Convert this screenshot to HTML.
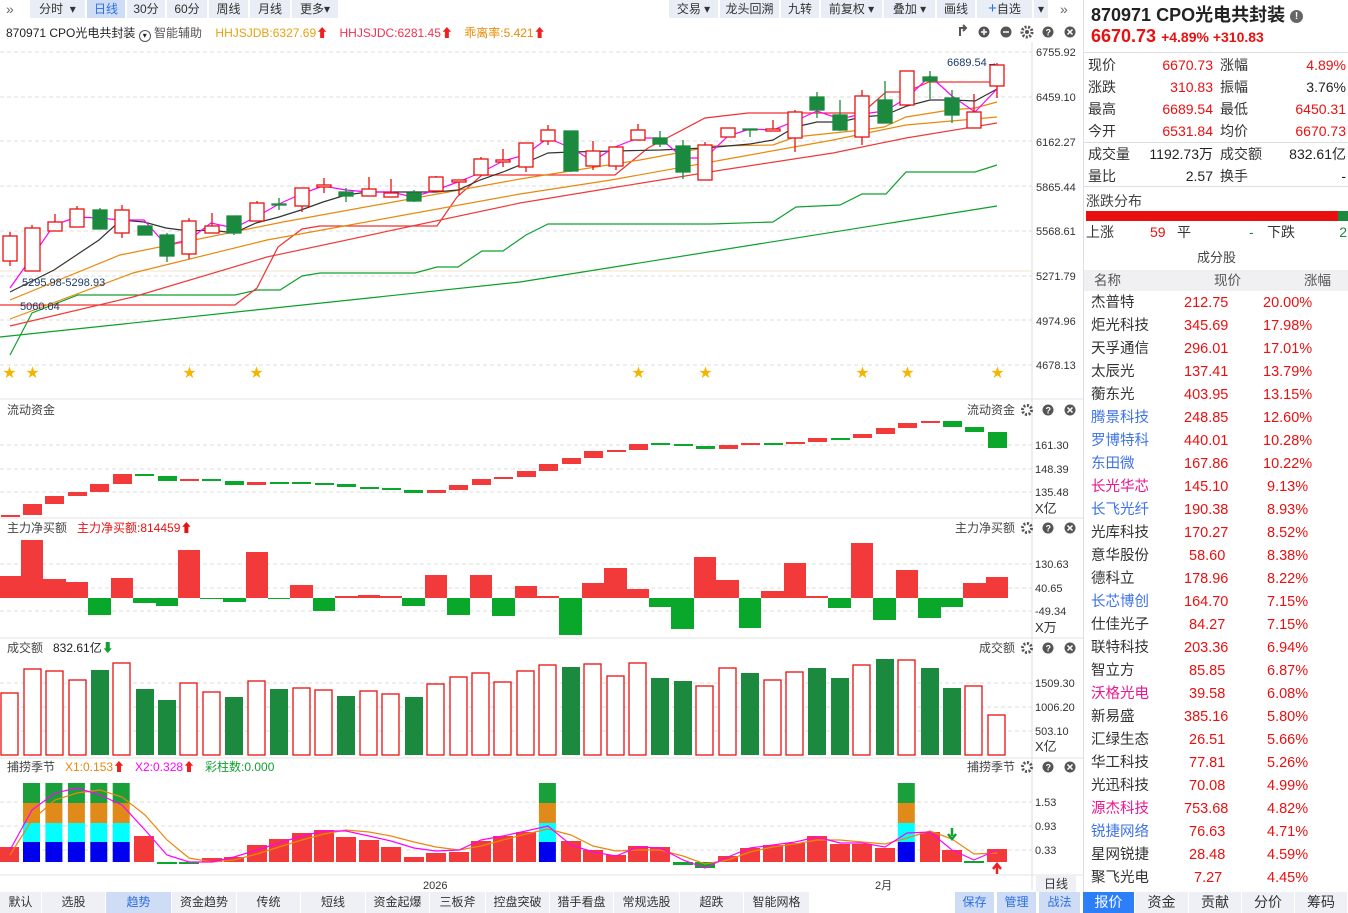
<!DOCTYPE html>
<html><head><meta charset="utf-8">
<style>
*{margin:0;padding:0;box-sizing:border-box}
body{width:1348px;height:913px;overflow:hidden;background:#fff;font-family:"Liberation Sans","Noto Sans CJK SC",sans-serif;font-size:12px;color:#333;position:relative}
.abs{position:absolute}
.tb{position:absolute;top:0;height:18px;background:#e9edf5;font-size:12px;line-height:18px;text-align:center;color:#333}
.tb.on{background:#cfdcf5;color:#2a6fe0}
.bt{position:absolute;top:892px;height:21px;line-height:21px;font-size:12px;text-align:center;background:#eef0f5;color:#333;border-right:1px solid #fff}
.rp{position:absolute;left:1083px;top:0;width:265px;height:892px;border-left:1px solid #dde;background:#fff}
.row{position:absolute;left:0;width:265px;height:22px;line-height:22px;font-size:14px}
.row span{position:absolute}
.lst{position:absolute;left:0;width:265px;height:23px;line-height:23px;font-size:14.5px}
.lst span{position:absolute}
.r{color:#e81010}
.b{color:#3d72e6}
.m{color:#ea1690}
</style></head><body>

<!-- top toolbar -->
<div class="abs" style="left:6px;top:0;font-size:14px;color:#666;line-height:18px">»</div>
<div class="tb" style="left:30px;width:55px">分时 &nbsp;▾</div>
<div class="tb on" style="left:87px;width:38px">日线</div>
<div class="tb" style="left:127px;width:38px">30分</div>
<div class="tb" style="left:167px;width:40px">60分</div>
<div class="tb" style="left:209px;width:39px">周线</div>
<div class="tb" style="left:250px;width:40px">月线</div>
<div class="tb" style="left:292px;width:46px">更多▾</div>
<div class="tb" style="left:669px;width:49px">交易 ▾</div>
<div class="tb" style="left:720px;width:59px">龙头回溯</div>
<div class="tb" style="left:781px;width:38px">九转</div>
<div class="tb" style="left:821px;width:61px">前复权 ▾</div>
<div class="tb" style="left:884px;width:51px">叠加 ▾</div>
<div class="tb" style="left:937px;width:38px">画线</div>
<div class="tb" style="left:977px;width:55px"><span style="color:#2a6fe0;font-size:15px">+</span>自选</div>
<div class="tb" style="left:1034px;width:14px">▾</div>
<div class="abs" style="left:1060px;top:0;font-size:14px;color:#666;line-height:18px">»</div>

<!-- info row -->
<div class="abs" style="left:6px;top:24px;font-size:12px;color:#222;white-space:nowrap">870971 CPO光电共封装 <span style="display:inline-block;width:12px;height:12px;border:1px solid #555;border-radius:50%;font-size:8px;line-height:10px;text-align:center;vertical-align:-1px">▾</span><span style="color:#555"> 智能辅助</span>
<span style="color:#e8a010;margin-left:10px">HHJSJDB:6327.69<span style="color:#f02020">⬆</span></span>
<span style="color:#f03050;margin-left:8px">HHJSJDC:6281.45<span style="color:#f02020">⬆</span></span>
<span style="color:#e88a00;margin-left:8px">乖离率:5.421<span style="color:#f02020">⬆</span></span></div>

<svg class="abs" style="left:0;top:0" width="1083" height="892" viewBox="0 0 1083 892">
<g font-family="Liberation Sans,Noto Sans CJK SC,sans-serif" font-size="11" fill="#333">
<!-- icons row -->
<g fill="none" stroke="#555" stroke-width="2">
<path d="M966 28 h-6 v8 M963 25 l3 3 -3 3" />
</g>
<circle cx="984" cy="32" r="5.5" fill="#555"/><path d="M981 32h6M984 29v6" stroke="#fff" stroke-width="1.5"/>
<circle cx="1006" cy="32" r="5.5" fill="#555"/><path d="M1003 32h6" stroke="#fff" stroke-width="1.5"/>
<circle cx="1027" cy="32" r="5" fill="none" stroke="#555" stroke-width="3" stroke-dasharray="2 1.5"/><circle cx="1027" cy="32" r="2" fill="#555"/>
<circle cx="1048" cy="32" r="5.5" fill="#555"/><text x="1045.5" y="35.5" font-size="9" fill="#fff" font-weight="bold">?</text>
<circle cx="1070" cy="32" r="5.5" fill="#555"/><path d="M1067.5 29.5l5 5M1072.5 29.5l-5 5" stroke="#fff" stroke-width="1.5"/>

<!-- main chart grid -->
<g stroke="#dcdcdc" stroke-dasharray="4 3">
<path d="M0 52H1032M0 97H1032M0 141H1032M0 186H1032M0 231H1032M0 276H1032M0 320H1032M0 365H1032"/>
</g>
<path d="M1032 42V890" stroke="#ddd"/>
<path d="M0 399H1083M0 518H1083M0 638H1083M0 758H1083M0 875H1083" stroke="#e3e3e3"/>
<g font-size="11" fill="#333">
<text x="1036" y="56">6755.92</text><text x="1036" y="101">6459.10</text><text x="1036" y="146">6162.27</text><text x="1036" y="191">5865.44</text><text x="1036" y="235">5568.61</text><text x="1036" y="280">5271.79</text><text x="1036" y="325">4974.96</text><text x="1036" y="369">4678.13</text>
</g>
<path d="M0 271H1032" stroke="#f0e4cc"/>

<!-- MA lines -->
<g fill="none" stroke-width="1.2">
<polyline stroke="#0aa02a" points="0,337 520,282 997,206"/>
<polyline stroke="#10a030" points="10,355 32,313 78,295 235,295 257,290 280,290 302,276 320,273 415,273 437,267 458,267 482,251 503,251 526,235 548,224 711,224 773,222 796,207 840,205 862,194 886,194 906,172 975,172 997,165"/>
<polyline stroke="#f03030" points="0,305 235,305 257,288 278,247 302,229 320,226 437,226 457,197 482,175 615,175 648,148 705,118 748,113 862,113 886,92 906,92 929,82 997,82"/>
<polyline stroke="#f03a3a" points="10,326 133,297 267,257 520,203 611,188 722,170 833,153 906,138 997,123"/>
<polyline stroke="#e8890c" points="10,319 133,273 267,240 520,194 611,180 722,160 833,140 906,125 997,117"/>
<polyline stroke="#e8890c" points="10,300 120,255 283,222 520,179 640,160 714,146 773,145 795,137 862,130 884,127 906,117 950,110 975,108 997,102"/>
<polyline stroke="#333" points="10,292 54,270 99,240 121,220 144,222 166,228 189,231 211,230 234,233 256,223 279,217 301,210 323,202 346,195 368,192 436,192 458,190 480,180 503,172 525,163 548,153 571,152 615,151 660,150 705,148 750,144 773,140 795,127 817,122 840,122 862,117 885,115 907,106 930,100 952,100 975,101 997,89"/>
<polyline stroke="#f0f" points="10,288 32,257 54,225 77,217 99,218 121,220 144,220 166,245 189,240 211,223 234,228 256,217 279,204 301,194 323,186 346,190 368,192 391,192 413,197 436,190 458,182 480,173 503,161 525,155 548,138 571,148 593,161 615,147 638,138 660,138 683,158 705,158 728,136 750,129 773,130 795,121 817,111 840,119 862,114 885,111 907,98 930,76 952,96 975,112 997,89"/>
</g>

<!-- candles -->
<g stroke="#e81010" stroke-width="1.3" fill="#fff">
<path d="M10 232V266M32 225V271M55 214V231M77 206V227M122 205V238M189 218V259M212 213V233M257 201V221M302 188V212M324 178V193M369 177V196M391 179V197M436 176V191M459 180V195M481 157V175M503 149V167M526 143V172M548 125V145M593 141V170M616 147V170M638 124V140M705 142V180M728 128V137M773 120V131M795 110V152M862 90V145M907 71V105M974 94V128M997 63V98"/>
<rect x="3" y="236" width="14" height="25"/><rect x="25" y="228" width="15" height="43"/><rect x="48" y="222" width="14" height="9"/><rect x="70" y="209" width="14" height="18"/><rect x="115" y="210" width="14" height="23"/><rect x="182" y="221" width="14" height="33"/><rect x="205" y="226" width="14" height="7"/><rect x="250" y="203" width="14" height="18"/><rect x="295" y="188" width="14" height="18"/><rect x="317" y="185" width="14" height="2"/><rect x="362" y="189" width="14" height="7"/><rect x="384" y="193" width="14" height="4"/><rect x="429" y="177" width="14" height="14"/><rect x="452" y="180" width="14" height="2"/><rect x="474" y="159" width="14" height="16"/><rect x="496" y="160" width="14" height="2"/><rect x="519" y="143" width="14" height="24"/><rect x="541" y="130" width="14" height="11"/><rect x="586" y="151" width="14" height="15"/><rect x="609" y="147" width="14" height="19"/><rect x="631" y="130" width="14" height="10"/><rect x="698" y="145" width="14" height="35"/><rect x="721" y="128" width="14" height="9"/><rect x="766" y="129" width="14" height="2"/><rect x="788" y="112" width="14" height="26"/><rect x="855" y="96" width="14" height="41"/><rect x="900" y="71" width="14" height="34"/><rect x="967" y="112" width="14" height="16"/><rect x="990" y="65" width="14" height="21"/>
</g>
<g stroke="#1b8a3e" stroke-width="1.3" fill="#1b8a3e">
<path d="M100 208V229M145 226V235M167 233V262M234 216V235M279 198V210M346 188V202M414 190V202M571 131V172M660 131V147M683 140V179M750 129V137M817 92V118M840 100V131M885 81V123M930 71V99M952 90V123"/>
<rect x="93" y="210" width="14" height="19"/><rect x="138" y="226" width="14" height="9"/><rect x="160" y="235" width="14" height="21"/><rect x="227" y="216" width="14" height="17"/><rect x="272" y="204" width="14" height="1"/><rect x="339" y="192" width="14" height="4"/><rect x="407" y="193" width="14" height="8"/><rect x="564" y="131" width="14" height="40"/><rect x="653" y="138" width="14" height="6"/><rect x="676" y="146" width="14" height="26"/><rect x="743" y="129" width="14" height="1"/><rect x="810" y="97" width="14" height="13"/><rect x="833" y="115" width="14" height="15"/><rect x="878" y="100" width="14" height="23"/><rect x="923" y="77" width="14" height="4"/><rect x="945" y="98" width="14" height="17"/>
</g>
<text x="22" y="286" fill="#1a3a6a">5295.98-5298.93</text>
<text x="20" y="310" fill="#1a3a6a">5060.04</text>
<text x="947" y="66" fill="#1a3a6a">6689.54→</text>
<g fill="#f5b400" font-size="13">
<text x="3" y="377">★</text><text x="26" y="377">★</text><text x="183" y="377">★</text><text x="250" y="377">★</text><text x="632" y="377">★</text><text x="699" y="377">★</text><text x="856" y="377">★</text><text x="901" y="377">★</text><text x="991" y="377">★</text>
</g>

<!-- panel headers + icons -->
<g font-size="12" fill="#444">
<text x="7" y="414">流动资金</text><text x="967" y="414">流动资金</text>
<text x="7" y="532">主力净买额</text><text x="77" y="532" fill="#e81010">主力净买额:814459⬆</text><text x="955" y="532">主力净买额</text>
<text x="7" y="652">成交额</text><text x="53" y="652" fill="#222">832.61亿<tspan fill="#10a030">⬇</tspan></text><text x="979" y="652">成交额</text>
<text x="7" y="771">捕捞季节</text><text x="65" y="771" fill="#e8890c">X1:0.153<tspan fill="#f02020">⬆</tspan></text><text x="135" y="771" fill="#f0f">X2:0.328<tspan fill="#f02020">⬆</tspan></text><text x="205" y="771" fill="#10a030">彩柱数:0.000</text><text x="967" y="771">捕捞季节</text>
</g>
<g id="ic">
<circle cx="1027" cy="410" r="4.5" fill="none" stroke="#555" stroke-width="3" stroke-dasharray="2 1.5"/>
<circle cx="1048" cy="410" r="5.5" fill="#555"/><text x="1045.5" y="413.5" font-size="9" fill="#fff" font-weight="bold">?</text>
<circle cx="1070" cy="410" r="5.5" fill="#555"/><path d="M1067.5 407.5l5 5M1072.5 407.5l-5 5" stroke="#fff" stroke-width="1.5"/>
</g>
<use href="#ic" y="118"/><use href="#ic" y="238"/><use href="#ic" y="357"/>

<!-- flow panel -->
<g stroke="#dcdcdc" stroke-dasharray="4 3"><path d="M0 445H1032M0 469H1032M0 492H1032M0 564H1032M0 588H1032M0 611H1032M0 683H1032M0 707H1032M0 731H1032M0 802H1032M0 826H1032M0 850H1032"/></g>
<g font-size="11" fill="#333">
<text x="1035" y="449">161.30</text><text x="1035" y="473">148.39</text><text x="1035" y="496">135.48</text><text x="1035" y="513" font-size="13">X亿</text>
<text x="1035" y="568">130.63</text><text x="1035" y="592">40.65</text><text x="1035" y="615">-49.34</text><text x="1035" y="632" font-size="13">X万</text>
<text x="1035" y="687">1509.30</text><text x="1035" y="711">1006.20</text><text x="1035" y="735">503.10</text><text x="1035" y="751" font-size="13">X亿</text>
<text x="1035" y="806">1.53</text><text x="1035" y="830">0.93</text><text x="1035" y="854">0.33</text>
</g>
<g fill="#f23a3a">
<rect x="1" y="515" width="19" height="2"/><rect x="23" y="504" width="19" height="11"/><rect x="45" y="496" width="19" height="8"/><rect x="68" y="492" width="19" height="4"/><rect x="90" y="484" width="19" height="8"/><rect x="113" y="474" width="19" height="10"/><rect x="180" y="479" width="19" height="2"/><rect x="247" y="482" width="19" height="3"/><rect x="427" y="490" width="19" height="3"/><rect x="449" y="485" width="19" height="5"/><rect x="472" y="479" width="19" height="6"/><rect x="494" y="477" width="19" height="2"/><rect x="517" y="471" width="19" height="6"/><rect x="539" y="464" width="19" height="7"/><rect x="562" y="458" width="19" height="6"/><rect x="584" y="451" width="19" height="7"/><rect x="607" y="450" width="19" height="2"/><rect x="629" y="444" width="19" height="6"/><rect x="719" y="445" width="19" height="4"/><rect x="741" y="443" width="19" height="2"/><rect x="786" y="442" width="19" height="2"/><rect x="808" y="438" width="19" height="4"/><rect x="853" y="434" width="19" height="4"/><rect x="876" y="428" width="19" height="6"/><rect x="898" y="423" width="19" height="5"/><rect x="921" y="421" width="19" height="2"/>
</g>
<g fill="#0aa82a">
<rect x="135" y="474" width="19" height="2"/><rect x="158" y="476" width="19" height="5"/><rect x="202" y="479" width="19" height="2"/><rect x="225" y="481" width="19" height="4"/><rect x="270" y="482" width="19" height="2"/><rect x="292" y="482" width="19" height="2"/><rect x="315" y="483" width="19" height="2"/><rect x="337" y="484" width="19" height="3"/><rect x="360" y="487" width="19" height="2"/><rect x="382" y="488" width="19" height="2"/><rect x="404" y="490" width="19" height="3"/><rect x="651" y="443" width="19" height="2"/><rect x="674" y="444" width="19" height="2"/><rect x="696" y="446" width="19" height="3"/><rect x="764" y="443" width="19" height="2"/><rect x="831" y="438" width="19" height="2"/><rect x="943" y="421" width="19" height="6"/><rect x="965" y="427" width="19" height="5"/><rect x="988" y="432" width="19" height="16"/>
</g>

<!-- main net buy -->
<g fill="#f23a3a">
<rect x="0" y="576" width="21" height="22"/><rect x="21" y="540" width="22" height="58"/><rect x="43" y="579" width="23" height="19"/><rect x="66" y="582" width="22" height="16"/><rect x="111" y="578" width="22" height="20"/><rect x="178" y="550" width="22" height="48"/><rect x="246" y="552" width="22" height="46"/><rect x="290" y="585" width="23" height="13"/><rect x="335" y="596" width="23" height="2"/><rect x="358" y="595" width="22" height="3"/><rect x="380" y="596" width="22" height="2"/><rect x="425" y="575" width="22" height="23"/><rect x="470" y="575" width="22" height="23"/><rect x="515" y="586" width="22" height="12"/><rect x="537" y="596" width="22" height="2"/><rect x="582" y="583" width="22" height="15"/><rect x="604" y="568" width="23" height="30"/><rect x="627" y="589" width="22" height="9"/><rect x="694" y="557" width="22" height="41"/><rect x="716" y="580" width="23" height="18"/><rect x="761" y="591" width="23" height="7"/><rect x="784" y="563" width="22" height="35"/><rect x="806" y="596" width="22" height="2"/><rect x="851" y="543" width="22" height="55"/><rect x="896" y="570" width="22" height="28"/><rect x="963" y="583" width="23" height="15"/><rect x="986" y="577" width="22" height="21"/>
</g>
<g fill="#0aa82a">
<rect x="88" y="598" width="23" height="17"/><rect x="133" y="598" width="23" height="5"/><rect x="156" y="598" width="22" height="8"/><rect x="200" y="598" width="23" height="1"/><rect x="223" y="598" width="23" height="4"/><rect x="268" y="598" width="22" height="1"/><rect x="313" y="598" width="22" height="13"/><rect x="402" y="598" width="23" height="8"/><rect x="447" y="598" width="23" height="17"/><rect x="492" y="598" width="23" height="18"/><rect x="559" y="598" width="23" height="37"/><rect x="649" y="598" width="22" height="9"/><rect x="671" y="598" width="23" height="31"/><rect x="739" y="598" width="22" height="30"/><rect x="828" y="598" width="23" height="10"/><rect x="873" y="598" width="23" height="22"/><rect x="918" y="598" width="23" height="20"/><rect x="941" y="598" width="22" height="9"/>
</g>

<!-- volume -->
<g fill="#fff" stroke="#e81010" stroke-width="1.3">
<rect x="1" y="693" width="17" height="62"/><rect x="24" y="669" width="17" height="86"/><rect x="46" y="671" width="17" height="84"/><rect x="69" y="680" width="17" height="75"/><rect x="113" y="663" width="17" height="92"/><rect x="180" y="683" width="17" height="72"/><rect x="203" y="692" width="17" height="63"/><rect x="248" y="681" width="17" height="74"/><rect x="293" y="688" width="17" height="67"/><rect x="315" y="690" width="17" height="65"/><rect x="360" y="691" width="17" height="64"/><rect x="382" y="694" width="17" height="61"/><rect x="427" y="684" width="17" height="71"/><rect x="450" y="677" width="17" height="78"/><rect x="472" y="673" width="17" height="82"/><rect x="494" y="682" width="17" height="73"/><rect x="517" y="671" width="17" height="84"/><rect x="539" y="665" width="17" height="90"/><rect x="584" y="664" width="17" height="91"/><rect x="607" y="676" width="17" height="79"/><rect x="629" y="663" width="17" height="92"/><rect x="696" y="686" width="17" height="69"/><rect x="719" y="668" width="17" height="87"/><rect x="764" y="680" width="17" height="75"/><rect x="786" y="672" width="17" height="83"/><rect x="853" y="665" width="17" height="90"/><rect x="898" y="660" width="17" height="95"/><rect x="965" y="686" width="17" height="69"/><rect x="988" y="715" width="17" height="40"/>
</g>
<g fill="#1b8a3e">
<rect x="91" y="670" width="18" height="85"/><rect x="136" y="689" width="18" height="66"/><rect x="158" y="700" width="18" height="55"/><rect x="225" y="697" width="18" height="58"/><rect x="270" y="689" width="18" height="66"/><rect x="337" y="696" width="18" height="59"/><rect x="405" y="697" width="18" height="58"/><rect x="562" y="667" width="18" height="88"/><rect x="651" y="678" width="18" height="77"/><rect x="674" y="681" width="18" height="74"/><rect x="741" y="673" width="18" height="82"/><rect x="808" y="668" width="18" height="87"/><rect x="831" y="678" width="18" height="77"/><rect x="876" y="659" width="18" height="96"/><rect x="921" y="668" width="18" height="87"/><rect x="943" y="688" width="18" height="67"/>
</g>

<!-- capture -->
<g fill="#f23a3a">
<rect x="0" y="847" width="19" height="15"/><rect x="134" y="836" width="20" height="26"/><rect x="202" y="858" width="20" height="4"/><rect x="224" y="857" width="20" height="5"/><rect x="247" y="845" width="20" height="17"/><rect x="269" y="839" width="20" height="23"/><rect x="292" y="833" width="20" height="29"/><rect x="314" y="830" width="20" height="32"/><rect x="336" y="837" width="20" height="25"/><rect x="359" y="840" width="20" height="22"/><rect x="381" y="847" width="20" height="15"/><rect x="404" y="857" width="20" height="5"/><rect x="426" y="853" width="20" height="9"/><rect x="449" y="852" width="20" height="10"/><rect x="471" y="841" width="20" height="21"/><rect x="493" y="836" width="20" height="26"/><rect x="516" y="832" width="20" height="30"/><rect x="561" y="841" width="20" height="21"/><rect x="583" y="850" width="20" height="12"/><rect x="606" y="855" width="20" height="7"/><rect x="628" y="846" width="20" height="16"/><rect x="650" y="847" width="20" height="15"/><rect x="718" y="856" width="20" height="6"/><rect x="740" y="848" width="20" height="14"/><rect x="763" y="845" width="20" height="17"/><rect x="785" y="843" width="20" height="19"/><rect x="807" y="836" width="20" height="26"/><rect x="830" y="844" width="20" height="18"/><rect x="852" y="844" width="20" height="18"/><rect x="875" y="848" width="20" height="14"/><rect x="920" y="832" width="20" height="30"/><rect x="942" y="850" width="20" height="12"/><rect x="987" y="849" width="20" height="13"/>
</g>
<g fill="#0aa82a"><rect x="157" y="862" width="20" height="2"/><rect x="179" y="862" width="20" height="2"/><rect x="673" y="862" width="20" height="3"/><rect x="695" y="862" width="20" height="6"/><rect x="964" y="861" width="20" height="2"/></g>
<g id="st"><rect x="23" y="783" width="17" height="20" fill="#1aa03a"/><rect x="23" y="803" width="17" height="20" fill="#e08a1a"/><rect x="23" y="823" width="17" height="19" fill="#00ffff"/><rect x="23" y="842" width="17" height="20" fill="#0000ee"/></g>
<use href="#st" x="22.4"/><use href="#st" x="44.9"/><use href="#st" x="67.3"/><use href="#st" x="89.7"/><use href="#st" x="515.9"/><use href="#st" x="874.8"/>
<polyline fill="none" stroke="#e8890c" stroke-width="1.2" points="10,855 32,820 55,800 77,793 100,790 122,797 145,815 167,840 189,858 212,862 234,860 257,854 279,847 302,840 324,834 346,830 369,832 391,836 414,842 436,847 459,850 481,846 503,840 526,834 548,829 571,835 593,846 616,851 638,850 660,850 683,856 705,864 728,860 750,852 773,847 795,844 817,840 840,840 862,842 885,844 907,838 930,831 952,839 974,854 997,853"/>
<polyline fill="none" stroke="#f0f" stroke-width="1.2" points="10,850 32,810 55,793 77,788 100,795 122,805 145,830 167,855 189,862 212,862 234,857 257,850 279,843 302,836 324,831 346,831 369,836 391,841 414,848 436,851 459,850 481,840 503,836 526,831 548,826 571,845 593,852 616,856 638,847 660,848 683,860 705,868 728,857 750,848 773,845 795,842 817,837 840,843 862,843 885,847 907,833 930,832 952,850 974,860 997,850"/>
<path d="M952 828v8M948 834l4 5 4-5" stroke="#10a030" stroke-width="2.5" fill="none"/>
<path d="M997 874v-8M993 869l4-5 4 5" stroke="#f02020" stroke-width="2.5" fill="none"/>

<text x="423" y="889" font-size="11">2026</text>
<text x="875" y="889" font-size="11">2月</text>
<rect x="1036" y="875" width="40" height="17" fill="#eef0f5"/>
<text x="1044" y="888" font-size="12">日线</text>
</g>
</svg>

<!-- bottom bar -->
<div class="bt" style="left:0;width:42px">默认</div>
<div class="bt" style="left:42px;width:64px">选股</div>
<div class="bt" style="left:106px;width:66px;background:#cfdcf5;color:#2a6fe0">趋势</div>
<div class="bt" style="left:172px;width:65px">资金趋势</div>
<div class="bt" style="left:237px;width:64px">传统</div>
<div class="bt" style="left:301px;width:65px">短线</div>
<div class="bt" style="left:366px;width:64px">资金起爆</div>
<div class="bt" style="left:430px;width:56px">三板斧</div>
<div class="bt" style="left:486px;width:64px">控盘突破</div>
<div class="bt" style="left:550px;width:64px">猎手看盘</div>
<div class="bt" style="left:614px;width:66px">常规选股</div>
<div class="bt" style="left:680px;width:64px">超跌</div>
<div class="bt" style="left:744px;width:66px">智能网格</div>
<div class="bt" style="left:810px;width:145px;background:#fff"></div>
<div class="bt" style="left:955px;width:40px;background:#cfdcf5;color:#2a6fe0">保存</div>
<div class="bt" style="left:997px;width:40px;background:#cfdcf5;color:#2a6fe0">管理</div>
<div class="bt" style="left:1039px;width:42px;background:#cfdcf5;color:#2a6fe0">战法</div>
<div class="bt" style="left:1083px;width:52px;background:#2d7ff9;color:#fff;font-size:14px">报价</div>
<div class="bt" style="left:1135px;width:54px;font-size:14px">资金</div>
<div class="bt" style="left:1189px;width:53px;font-size:14px">贡献</div>
<div class="bt" style="left:1242px;width:53px;font-size:14px">分价</div>
<div class="bt" style="left:1295px;width:53px;font-size:14px">筹码</div>

<!-- right panel -->
<div class="rp">
<div class="abs" style="left:7px;top:1px;font-size:18px;font-weight:bold;color:#222;white-space:nowrap">870971 CPO光电共封装 <span style="display:inline-block;width:13px;height:13px;border-radius:50%;background:#666;color:#fff;font-size:10px;line-height:13px;text-align:center;vertical-align:2px">!</span></div>
<div class="abs r" style="left:7px;top:26px;font-size:18px;font-weight:bold;white-space:nowrap">6670.73 <span style="font-size:14px">+4.89% +310.83</span></div>
<div class="abs" style="left:0;top:52px;width:265px;border-top:1px solid #ddd"></div>
<div class="row" style="top:54px"><span style="left:4px">现价</span><span class="r" style="right:136px">6670.73</span><span style="left:136px">涨幅</span><span class="r" style="right:3px">4.89%</span></div>
<div class="row" style="top:76px"><span style="left:4px">涨跌</span><span class="r" style="right:136px">310.83</span><span style="left:136px">振幅</span><span style="right:3px;color:#222">3.76%</span></div>
<div class="row" style="top:98px"><span style="left:4px">最高</span><span class="r" style="right:136px">6689.54</span><span style="left:136px">最低</span><span class="r" style="right:3px">6450.31</span></div>
<div class="row" style="top:120px"><span style="left:4px">今开</span><span class="r" style="right:136px">6531.84</span><span style="left:136px">均价</span><span class="r" style="right:3px">6670.73</span></div>
<div class="abs" style="left:0;top:142px;width:265px;border-top:1px solid #ddd"></div>
<div class="row" style="top:143px"><span style="left:4px">成交量</span><span style="right:136px;color:#222">1192.73万</span><span style="left:136px">成交额</span><span style="right:3px;color:#222">832.61亿</span></div>
<div class="row" style="top:165px"><span style="left:4px">量比</span><span style="right:136px;color:#222">2.57</span><span style="left:136px">换手</span><span style="right:3px;color:#222">-</span></div>
<div class="abs" style="left:0;top:186px;width:265px;border-top:1px solid #ddd"></div>
<div class="row" style="top:190px"><span style="left:2px;color:#444">涨跌分布</span></div>
<div class="abs" style="left:2px;top:211px;width:252px;height:10px;background:#e81010"></div>
<div class="abs" style="left:254px;top:211px;width:10px;height:10px;background:#1b8a3e"></div>
<div class="row" style="top:221px"><span style="left:2px">上涨</span><span class="r" style="left:66px">59</span><span style="left:93px">平</span><span style="left:165px;color:#1b8a3e">-</span><span style="left:183px">下跌</span><span style="right:2px;color:#1b8a3e">2</span></div>
<div class="row" style="top:247px;text-align:center;font-size:13px"><span style="left:0;width:265px;color:#444">成分股</span></div>
<div class="abs" style="left:0;top:270px;width:265px;height:21px;background:#f0f0f2"></div>
<div class="row" style="top:270px;font-size:13.5px;color:#555"><span style="left:10px">名称</span><span style="left:130px">现价</span><span style="left:220px">涨幅</span></div>

<div class="lst" style="top:292px"><span style="left:7px">杰普特</span><span class="r" style="left:100px">212.75</span><span class="r" style="left:179px">20.00%</span></div>
<div class="lst" style="top:315px"><span style="left:7px">炬光科技</span><span class="r" style="left:100px">345.69</span><span class="r" style="left:179px">17.98%</span></div>
<div class="lst" style="top:338px"><span style="left:7px">天孚通信</span><span class="r" style="left:100px">296.01</span><span class="r" style="left:179px">17.01%</span></div>
<div class="lst" style="top:361px"><span style="left:7px">太辰光</span><span class="r" style="left:100px">137.41</span><span class="r" style="left:179px">13.79%</span></div>
<div class="lst" style="top:384px"><span style="left:7px">蘅东光</span><span class="r" style="left:100px">403.95</span><span class="r" style="left:179px">13.15%</span></div>
<div class="lst" style="top:407px"><span class="b" style="left:7px">腾景科技</span><span class="r" style="left:100px">248.85</span><span class="r" style="left:179px">12.60%</span></div>
<div class="lst" style="top:430px"><span class="b" style="left:7px">罗博特科</span><span class="r" style="left:100px">440.01</span><span class="r" style="left:179px">10.28%</span></div>
<div class="lst" style="top:453px"><span class="b" style="left:7px">东田微</span><span class="r" style="left:100px">167.86</span><span class="r" style="left:179px">10.22%</span></div>
<div class="lst" style="top:476px"><span class="m" style="left:7px">长光华芯</span><span class="r" style="left:100px">145.10</span><span class="r" style="left:183px">9.13%</span></div>
<div class="lst" style="top:499px"><span class="b" style="left:7px">长飞光纤</span><span class="r" style="left:100px">190.38</span><span class="r" style="left:183px">8.93%</span></div>
<div class="lst" style="top:522px"><span style="left:7px">光库科技</span><span class="r" style="left:100px">170.27</span><span class="r" style="left:183px">8.52%</span></div>
<div class="lst" style="top:545px"><span style="left:7px">意华股份</span><span class="r" style="left:105px">58.60</span><span class="r" style="left:183px">8.38%</span></div>
<div class="lst" style="top:568px"><span style="left:7px">德科立</span><span class="r" style="left:100px">178.96</span><span class="r" style="left:183px">8.22%</span></div>
<div class="lst" style="top:591px"><span class="b" style="left:7px">长芯博创</span><span class="r" style="left:100px">164.70</span><span class="r" style="left:183px">7.15%</span></div>
<div class="lst" style="top:614px"><span style="left:7px">仕佳光子</span><span class="r" style="left:105px">84.27</span><span class="r" style="left:183px">7.15%</span></div>
<div class="lst" style="top:637px"><span style="left:7px">联特科技</span><span class="r" style="left:100px">203.36</span><span class="r" style="left:183px">6.94%</span></div>
<div class="lst" style="top:660px"><span style="left:7px">智立方</span><span class="r" style="left:105px">85.85</span><span class="r" style="left:183px">6.87%</span></div>
<div class="lst" style="top:683px"><span class="m" style="left:7px">沃格光电</span><span class="r" style="left:105px">39.58</span><span class="r" style="left:183px">6.08%</span></div>
<div class="lst" style="top:706px"><span style="left:7px">新易盛</span><span class="r" style="left:100px">385.16</span><span class="r" style="left:183px">5.80%</span></div>
<div class="lst" style="top:729px"><span style="left:7px">汇绿生态</span><span class="r" style="left:105px">26.51</span><span class="r" style="left:183px">5.66%</span></div>
<div class="lst" style="top:752px"><span style="left:7px">华工科技</span><span class="r" style="left:105px">77.81</span><span class="r" style="left:183px">5.26%</span></div>
<div class="lst" style="top:775px"><span style="left:7px">光迅科技</span><span class="r" style="left:105px">70.08</span><span class="r" style="left:183px">4.99%</span></div>
<div class="lst" style="top:798px"><span class="m" style="left:7px">源杰科技</span><span class="r" style="left:100px">753.68</span><span class="r" style="left:183px">4.82%</span></div>
<div class="lst" style="top:821px"><span class="b" style="left:7px">锐捷网络</span><span class="r" style="left:105px">76.63</span><span class="r" style="left:183px">4.71%</span></div>
<div class="lst" style="top:844px"><span style="left:7px">星网锐捷</span><span class="r" style="left:105px">28.48</span><span class="r" style="left:183px">4.59%</span></div>
<div class="lst" style="top:867px"><span style="left:7px">聚飞光电</span><span class="r" style="left:110px">7.27</span><span class="r" style="left:183px">4.45%</span></div>
</div>
</body></html>
